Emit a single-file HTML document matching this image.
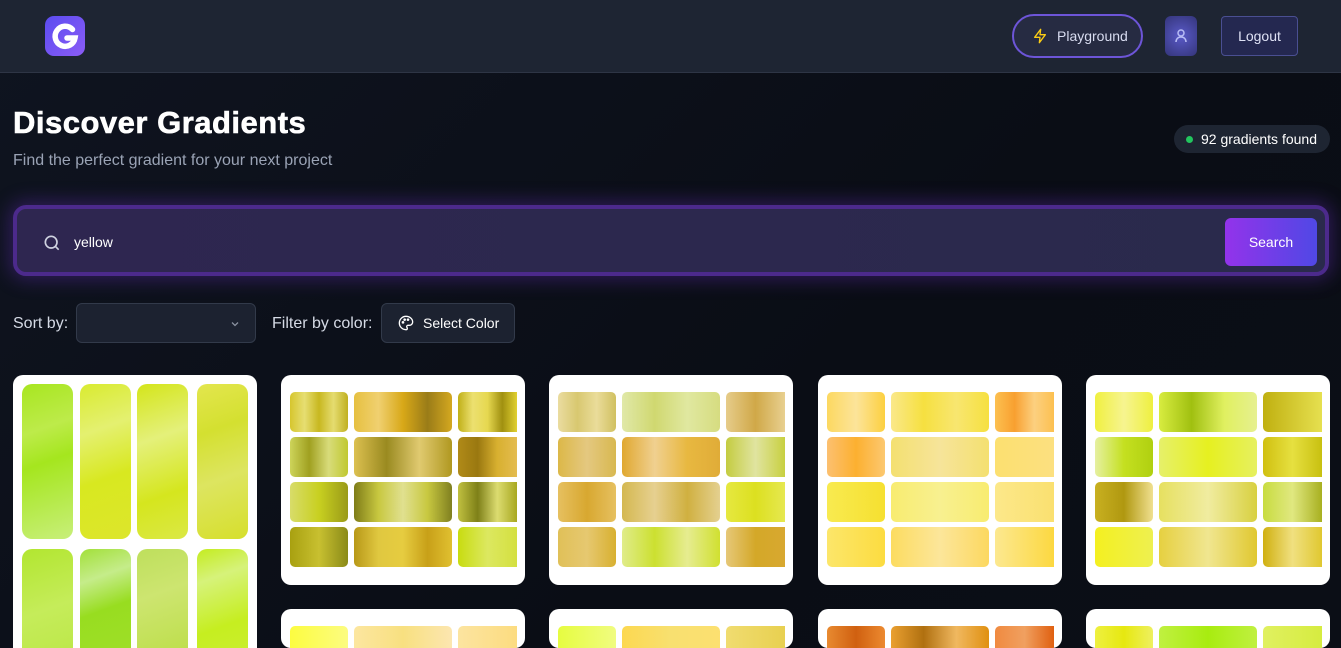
<!DOCTYPE html>
<html><head><meta charset="utf-8"><style>
*{box-sizing:border-box;margin:0;padding:0}
html{width:1341px;height:648px;overflow:hidden}
body{width:1341px;height:648px;overflow:hidden;background:linear-gradient(135deg,#0f1420,#0a0d15 60%,#0b0e16);font-family:"Liberation Sans",sans-serif;color:#fff;position:relative}
.hdr{position:absolute;left:0;top:0;width:1341px;height:73px;background:#1e2533;border-bottom:1px solid #2e3545}
.logo{position:absolute;left:45px;top:16px;width:40px;height:40px;border-radius:9px;background:linear-gradient(135deg,#5b4cf0,#8b5cf6)}
.play{position:absolute;left:1012px;top:14px;width:131px;height:44px;border-radius:22px;border:2px solid #6d55d8;background:#262b42;font-size:14px;color:#d8dcf0;display:flex;align-items:center;padding-left:18px;gap:9px}
.user{position:absolute;left:1165px;top:16px;width:32px;height:40px;border-radius:6px;background:radial-gradient(circle,#5a5ac8,#34357a)}
.logout{position:absolute;left:1221px;top:16px;width:77px;height:40px;border-radius:4px;border:1px solid #4a4f92;background:#242850;color:#dfe2f5;font-size:14px;display:flex;align-items:center;justify-content:center}
h1{position:absolute;left:13px;top:105px;font-size:31px;font-weight:bold;letter-spacing:0.5px;-webkit-text-stroke:0.6px #fff}
.sub{position:absolute;left:13px;top:152px;font-size:16px;color:#9aa3b5}
.found{position:absolute;left:1174px;top:125px;width:156px;height:28px;border-radius:14px;background:#1e2532;font-size:14px;display:flex;align-items:center;padding-left:12px;gap:8px}
.found i{width:7px;height:7px;border-radius:50%;background:#22c55e}
.search{position:absolute;left:13px;top:205px;width:1316px;height:71px;border-radius:13px;border:4px solid #4c2a8c;background:linear-gradient(90deg,#2e2650,#2a2a4c);box-shadow:0 0 18px 4px rgba(110,50,200,.35)}
.search .q{position:absolute;left:57px;top:25px;font-size:14px}
.sbtn{position:absolute;left:1208px;top:9px;width:92px;height:48px;border-radius:6px;background:linear-gradient(90deg,#9333ea,#5048e5);font-size:14px;display:flex;align-items:center;justify-content:center}
.lbl{position:absolute;top:315px;font-size:16px;color:#d5dae5}
.sel{position:absolute;left:76px;top:303px;width:180px;height:40px;border-radius:6px;border:1px solid #323a4a;background:#1c2230}
.cbtn{position:absolute;left:381px;top:303px;width:134px;height:40px;border-radius:6px;border:1px solid #323a4a;background:#1c2230;font-size:14px;display:flex;align-items:center;padding-left:16px;gap:9px}
.card{position:absolute;width:244px;height:210px;background:#fff;border-radius:10px;overflow:hidden}
.g{display:grid;grid-template-columns:58px 98px 59px;grid-auto-rows:40px;gap:5px 6px;padding:17px 9px}
.g div{border-radius:5px}
.g div:nth-child(3n){border-radius:5px 0 0 5px}
.low{height:39px}
.c1{left:13px;top:375px;height:273px;border-radius:10px 10px 0 0}
.c1 .t{position:absolute;width:51px;height:155px;border-radius:10px}
</style></head><body>
<div class="hdr">
<div class="logo"><svg width="40" height="40" viewBox="0 0 40 40"><path d="M27.5 13.5a10 10 0 1 0 2.5 8.5h-8" fill="none" stroke="#fff" stroke-width="5.5" stroke-linecap="round"/></svg></div>
<div class="play"><svg width="16" height="16" viewBox="0 0 24 24" fill="none" stroke="#facc15" stroke-width="2" stroke-linejoin="round"><path d="M13 2 4 14h8l-1 8 9-12h-8z"/></svg>Playground</div>
<div class="user"><svg width="32" height="40" viewBox="0 0 32 40" fill="none" stroke="#b8bcf5" stroke-width="1.5"><circle cx="16" cy="17" r="3"/><path d="M11 26c0-3 2-5 5-5s5 2 5 5"/></svg></div>
<div class="logout">Logout</div>
</div>
<h1>Discover Gradients</h1>
<div class="sub">Find the perfect gradient for your next project</div>
<div class="found"><i></i>92 gradients found</div>
<div class="search"><svg style="position:absolute;left:25px;top:24px" width="20" height="20" viewBox="0 0 24 24" fill="none" stroke="#cfd2e0" stroke-width="2"><circle cx="11" cy="11" r="7"/><path d="m20 20-4-4"/></svg><div class="q">yellow</div><div class="sbtn">Search</div></div>
<div class="lbl" style="left:13px">Sort by:</div>
<div class="sel"><svg style="position:absolute;left:152px;top:14px" width="12" height="12" viewBox="0 0 24 24" fill="none" stroke="#8a91a0" stroke-width="2.5"><path d="m6 9 6 6 6-6"/></svg></div>
<div class="lbl" style="left:272px">Filter by color:</div>
<div class="cbtn"><svg width="16" height="16" viewBox="0 0 24 24" fill="none" stroke="#fff" stroke-width="2"><path d="M12 2a10 10 0 0 0 0 20c1.5 0 2-1 2-2s-1-1.5-1-2.5 1-2 2-2h2a5 5 0 0 0 5-5C22 6 17.5 2 12 2z"/><circle cx="7.5" cy="11" r="1"/><circle cx="10" cy="7" r="1"/><circle cx="15" cy="7" r="1"/></svg>Select Color</div>

<div class="card c1">
<div class="t" style="left:9px;top:9px;background:linear-gradient(160deg,#a8e620,#bdeb4a 30%,#a5e61e 50%,#c8ef7a)"></div>
<div class="t" style="left:67px;top:9px;background:linear-gradient(160deg,#d9eb30,#e4f070 30%,#d8e820 60%,#dde62c)"></div>
<div class="t" style="left:124px;top:9px;background:linear-gradient(160deg,#d4e51a,#e4f07a 35%,#d5e61e 70%,#dbe845)"></div>
<div class="t" style="left:184px;top:9px;background:linear-gradient(160deg,#e3e64e,#d4e030 30%,#dde560 60%,#d6df2c)"></div>
<div class="t" style="left:9px;top:174px;background:linear-gradient(160deg,#b2e630,#c5ec5a 40%,#b5e43a)"></div>
<div class="t" style="left:67px;top:174px;background:linear-gradient(160deg,#a2e03a,#c5ec8a 20%,#98dd20 40%,#a5e030)"></div>
<div class="t" style="left:124px;top:174px;background:linear-gradient(160deg,#bedf5c,#cde570 30%,#b2da30)"></div>
<div class="t" style="left:184px;top:174px;background:linear-gradient(160deg,#c4ec20,#d6f27a 20%,#c6ee20 50%,#cef040)"></div>
</div>

<div class="card" style="left:281px;top:375px"><div class="g">
<div style="background:linear-gradient(90deg,#d6c62e,#e6de72,#c8b820,#e5dc70,#c0b020)"></div>
<div style="background:linear-gradient(90deg,#e6c040,#f0d070,#d8a818,#9a7c18,#d4a820)"></div>
<div style="background:linear-gradient(90deg,#c0b018,#ece070,#e6d850,#a09010,#e0d030)"></div>
<div style="background:linear-gradient(90deg,#cdd45a,#a0a020,#d8dc7a,#c0c830)"></div>
<div style="background:linear-gradient(90deg,#dcc050,#9a8a20,#e0ca70,#b09820)"></div>
<div style="background:linear-gradient(90deg,#b08a18,#9a7810,#d8b030,#e4bc50)"></div>
<div style="background:linear-gradient(90deg,#d8dc6a,#c8d020,#9a9a18)"></div>
<div style="background:linear-gradient(90deg,#7e7c18,#c8c840,#e0e090,#c8c840,#808020)"></div>
<div style="background:linear-gradient(90deg,#c0c040,#7e8018,#dcdc70,#a8a820)"></div>
<div style="background:linear-gradient(90deg,#a8a010,#c8c030,#8a8a18)"></div>
<div style="background:linear-gradient(90deg,#b89818,#e0c840,#e6cc40,#c8a018,#e0c030)"></div>
<div style="background:linear-gradient(90deg,#c8dc10,#dce860,#d4e040)"></div>
</div></div>

<div class="card" style="left:549px;top:375px"><div class="g">
<div style="background:linear-gradient(90deg,#eadca0,#d8c870,#eadc9a,#d0c060)"></div>
<div style="background:linear-gradient(90deg,#e0e8a8,#d0d870,#e0e8a0,#d6dc80)"></div>
<div style="background:linear-gradient(90deg,#e6cc8a,#d0a848,#e8d090)"></div>
<div style="background:linear-gradient(90deg,#dcb848,#e4c880,#d8b850)"></div>
<div style="background:linear-gradient(90deg,#e0a830,#f0d090,#e8b840,#e0ac38)"></div>
<div style="background:linear-gradient(90deg,#c4cc40,#e0e4a0,#c8d040)"></div>
<div style="background:linear-gradient(90deg,#e6c060,#d8a830,#e6c060)"></div>
<div style="background:linear-gradient(90deg,#d4b850,#e6d090,#d0b040,#e4d090)"></div>
<div style="background:linear-gradient(90deg,#e6e840,#dce020,#e6e850)"></div>
<div style="background:linear-gradient(90deg,#e0c058,#e6c870,#d8b030)"></div>
<div style="background:linear-gradient(90deg,#e0ec8a,#cce030,#e6ec90,#d0e030)"></div>
<div style="background:linear-gradient(90deg,#e6c878,#d4a828,#d8a830)"></div>
</div></div>

<div class="card" style="left:818px;top:375px"><div class="g">
<div style="background:linear-gradient(90deg,#fcd860,#fce49a,#fcd040)"></div>
<div style="background:linear-gradient(90deg,#fae88a,#f6e040,#f8e670,#f6e040)"></div>
<div style="background:linear-gradient(90deg,#fcc050,#f8a030,#fcd080,#fcc050)"></div>
<div style="background:linear-gradient(90deg,#fcc070,#fcb030,#fcc870)"></div>
<div style="background:linear-gradient(90deg,#f4e070,#f6e49a,#f4e070)"></div>
<div style="background:linear-gradient(90deg,#fce070,#fce080)"></div>
<div style="background:linear-gradient(90deg,#f8ea50,#f6e030)"></div>
<div style="background:linear-gradient(90deg,#f8ec70,#f8f090,#f8ec70)"></div>
<div style="background:linear-gradient(90deg,#fce88a,#fae070)"></div>
<div style="background:linear-gradient(90deg,#fce66a,#fcdc40)"></div>
<div style="background:linear-gradient(90deg,#fcdc60,#fce69a,#fcd860)"></div>
<div style="background:linear-gradient(90deg,#fce890,#fcd840)"></div>
</div></div>

<div class="card" style="left:1086px;top:375px"><div class="g">
<div style="background:linear-gradient(90deg,#f0f040,#f6f490,#eef040)"></div>
<div style="background:linear-gradient(90deg,#d8ec40,#a0c010,#e0f060,#e6f090)"></div>
<div style="background:linear-gradient(90deg,#c0b010,#e6e050)"></div>
<div style="background:linear-gradient(90deg,#e6f0a0,#c4e020,#b0d010)"></div>
<div style="background:linear-gradient(90deg,#e6f06a,#e6f020,#e6f060)"></div>
<div style="background:linear-gradient(90deg,#d0c010,#e6e040,#c8c010)"></div>
<div style="background:linear-gradient(90deg,#c8b020,#b09810,#f0e090)"></div>
<div style="background:linear-gradient(90deg,#e6e060,#f0eca0,#d8d040)"></div>
<div style="background:linear-gradient(90deg,#c8dc40,#e0e880,#a8b020)"></div>
<div style="background:linear-gradient(90deg,#f4f020,#eef050)"></div>
<div style="background:linear-gradient(90deg,#e6d040,#f0e690,#e0c830)"></div>
<div style="background:linear-gradient(90deg,#d0b010,#f0e080,#e0c830)"></div>
</div></div>

<div class="card low" style="left:281px;top:609px"><div class="g">
<div style="background:linear-gradient(90deg,#fcfc40,#fcfc80)"></div>
<div style="background:linear-gradient(90deg,#fce6a0,#f8e080,#fce6b0)"></div>
<div style="background:linear-gradient(90deg,#fce4a0,#fcdc80)"></div>
</div></div>
<div class="card low" style="left:549px;top:609px"><div class="g">
<div style="background:linear-gradient(90deg,#e6fc40,#f0fc80)"></div>
<div style="background:linear-gradient(90deg,#fcd850,#f8e070,#fce070)"></div>
<div style="background:linear-gradient(90deg,#f0dc70,#e8d050)"></div>
</div></div>
<div class="card low" style="left:818px;top:609px"><div class="g">
<div style="background:linear-gradient(90deg,#e88a30,#d06010,#ec8a30)"></div>
<div style="background:linear-gradient(90deg,#eaa030,#b07010,#f0b860,#e09010)"></div>
<div style="background:linear-gradient(90deg,#f08a40,#f0a060,#e06010)"></div>
</div></div>
<div class="card low" style="left:1086px;top:609px"><div class="g">
<div style="background:linear-gradient(90deg,#eef040,#e6e810,#eef060)"></div>
<div style="background:linear-gradient(90deg,#c0f040,#a8ec10,#c0f040)"></div>
<div style="background:linear-gradient(90deg,#e0f060,#d6ec40)"></div>
</div></div>
</body></html>
